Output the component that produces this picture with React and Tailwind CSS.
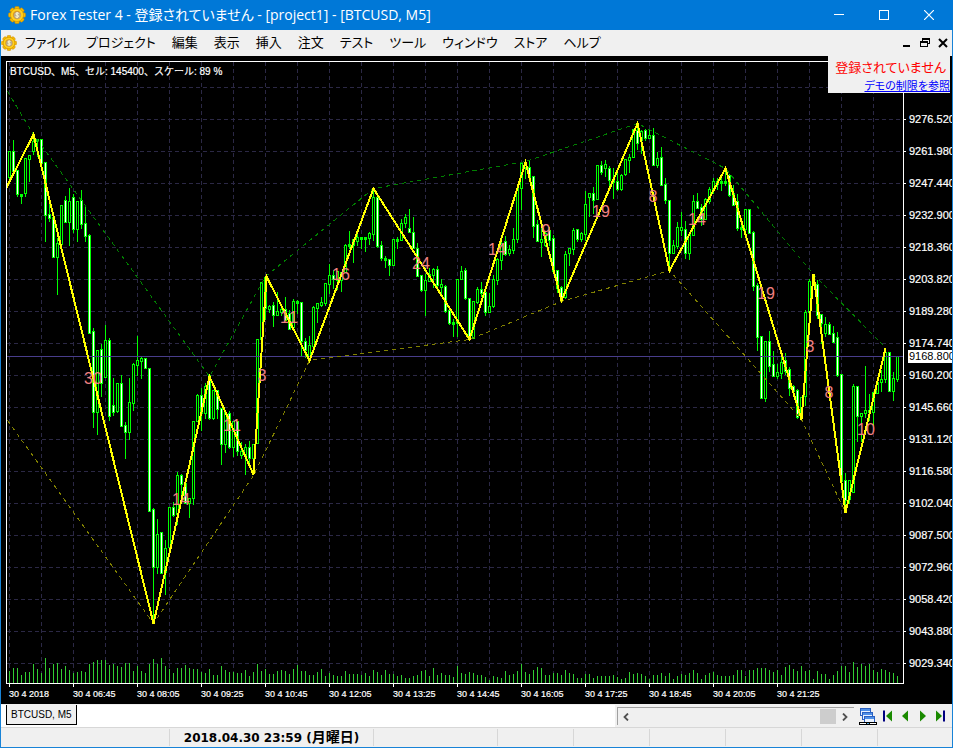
import { clsx } from 'clsx';

const MENU = ['ファイル', 'プロジェクト', '編集', '表示', '挿入', '注文', 'テスト', 'ツール', 'ウィンドウ', 'ストア', 'ヘルプ'];

const PRICES = [
  '9276.520', '9261.980', '9247.440', '9232.900', '9218.360', '9203.820', '9189.280', '9174.740', '9160.200',
  '9145.660', '9131.120', '9116.580', '9102.040', '9087.500', '9072.960', '9058.420', '9043.880', '9029.340',
];

const TIMES = [
  '30 4 2018', '30 4 06:45', '30 4 08:05', '30 4 09:25', '30 4 10:45', '30 4 12:05', '30 4 13:25',
  '30 4 14:45', '30 4 16:05', '30 4 17:25', '30 4 18:45', '30 4 20:05', '30 4 21:25',
];

// [high, body top, body bottom, low, falling]
const CANDLES = [
  [151, 151, 177, 180, 0], [140, 151, 171, 171, 1], [170, 170, 194, 196, 1], [194, 194, 196, 203, 0], [158, 158, 193, 196, 0],
  [155, 155, 159, 181, 0], [133, 141, 151, 154, 0], [139, 139, 141, 156, 0], [139, 139, 163, 163, 1], [162, 162, 215, 241, 1],
  [200, 214, 218, 221, 1], [217, 217, 257, 257, 1], [238, 243, 257, 294, 0], [205, 205, 244, 244, 0], [196, 200, 222, 222, 1],
  [188, 201, 222, 245, 0], [194, 197, 229, 232, 1], [201, 201, 229, 241, 0], [190, 200, 224, 228, 1], [207, 223, 236, 241, 1],
  [234, 235, 333, 333, 1], [328, 331, 412, 427, 1], [350, 350, 412, 434, 0], [344, 349, 383, 396, 1], [325, 340, 377, 377, 0],
  [338, 340, 416, 420, 1], [378, 405, 412, 415, 1], [383, 383, 411, 412, 0], [375, 383, 426, 426, 1], [422, 425, 432, 458, 1],
  [378, 402, 432, 439, 0], [363, 364, 403, 410, 0], [336, 360, 365, 375, 0], [357, 358, 361, 378, 0], [358, 358, 368, 368, 1],
  [368, 368, 511, 511, 1], [508, 509, 567, 622, 1], [519, 534, 567, 573, 0], [532, 532, 573, 573, 1], [540, 548, 572, 594, 0],
  [507, 507, 547, 547, 0], [502, 507, 515, 516, 1], [472, 475, 514, 524, 0], [474, 475, 484, 500, 1], [480, 483, 503, 503, 1],
  [498, 498, 503, 517, 0], [421, 421, 498, 504, 0], [394, 395, 421, 421, 0], [388, 395, 413, 430, 1], [383, 386, 413, 418, 0],
  [375, 375, 418, 419, 1], [390, 390, 418, 419, 0], [390, 390, 409, 418, 1], [408, 408, 444, 464, 1], [410, 412, 444, 452, 0],
  [411, 413, 447, 448, 1], [421, 421, 447, 456, 0], [421, 421, 451, 455, 1], [442, 451, 455, 458, 0], [444, 447, 455, 474, 0],
  [441, 447, 458, 462, 1], [444, 444, 458, 473, 0], [339, 339, 443, 443, 0], [282, 282, 339, 339, 0], [277, 277, 308, 319, 1],
  [305, 306, 309, 312, 0], [302, 305, 315, 326, 1], [292, 311, 315, 315, 0], [304, 309, 312, 315, 0], [297, 309, 320, 320, 1],
  [310, 313, 329, 329, 1], [299, 301, 327, 327, 0], [300, 301, 303, 313, 0], [302, 302, 341, 356, 1], [338, 341, 350, 357, 1],
  [336, 345, 358, 358, 0], [306, 307, 346, 346, 0], [303, 303, 308, 322, 0], [297, 302, 305, 306, 0], [283, 283, 303, 305, 0],
  [264, 275, 284, 293, 0], [270, 275, 279, 288, 1], [271, 271, 280, 289, 0], [272, 272, 280, 291, 0], [244, 245, 272, 272, 0],
  [231, 244, 246, 248, 0], [239, 239, 245, 262, 0], [233, 237, 241, 245, 0], [237, 237, 239, 248, 0], [237, 237, 239, 251, 0],
  [232, 233, 238, 244, 0], [188, 197, 234, 240, 0], [197, 197, 246, 247, 1], [241, 245, 258, 260, 1], [256, 258, 260, 267, 0],
  [259, 259, 265, 275, 1], [239, 239, 265, 265, 0], [237, 239, 241, 248, 0], [219, 223, 240, 240, 0], [214, 217, 223, 227, 0],
  [209, 228, 232, 232, 1], [217, 232, 248, 248, 1], [243, 248, 276, 276, 1], [275, 275, 290, 291, 1], [274, 280, 290, 315, 0],
  [268, 274, 281, 281, 0], [268, 269, 275, 287, 0], [266, 269, 285, 286, 1], [279, 284, 287, 293, 0], [285, 286, 311, 312, 1],
  [310, 310, 323, 324, 1], [319, 322, 324, 336, 0], [279, 279, 323, 336, 0], [266, 271, 279, 279, 0], [268, 270, 298, 299, 1],
  [298, 298, 338, 338, 1], [301, 301, 338, 338, 0], [287, 289, 302, 303, 0], [282, 289, 293, 296, 1], [289, 292, 312, 315, 1],
  [293, 306, 312, 312, 0], [275, 279, 306, 307, 0], [258, 259, 280, 284, 0], [241, 243, 260, 269, 0], [236, 241, 254, 255, 1],
  [245, 249, 253, 255, 0], [228, 239, 250, 253, 0], [187, 188, 239, 242, 0], [163, 163, 188, 209, 0], [163, 163, 167, 178, 0],
  [161, 167, 177, 180, 1], [176, 176, 226, 237, 1], [220, 224, 241, 241, 1], [220, 239, 242, 256, 0], [232, 233, 245, 246, 0],
  [227, 230, 240, 245, 1], [235, 238, 271, 271, 1], [270, 270, 288, 292, 1], [286, 287, 299, 300, 1], [251, 254, 297, 298, 0],
  [248, 248, 253, 265, 0], [228, 230, 249, 254, 0], [229, 229, 239, 241, 1], [232, 233, 239, 241, 0], [191, 204, 234, 240, 0],
  [193, 193, 197, 216, 0], [187, 193, 200, 213, 1], [165, 165, 199, 199, 0], [161, 165, 172, 174, 1], [160, 164, 168, 176, 0],
  [166, 168, 180, 188, 1], [168, 179, 182, 198, 0], [172, 181, 189, 190, 1], [174, 175, 189, 190, 0], [159, 159, 174, 175, 0],
  [154, 157, 160, 172, 0], [129, 129, 157, 157, 0], [124, 130, 143, 149, 1], [130, 131, 140, 153, 0], [129, 130, 138, 140, 1],
  [129, 135, 138, 138, 0], [128, 135, 165, 165, 1], [152, 158, 165, 167, 0], [147, 157, 185, 185, 1], [178, 184, 200, 203, 1],
  [200, 200, 253, 269, 1], [240, 245, 253, 253, 0], [222, 227, 246, 248, 0], [212, 227, 230, 235, 0], [221, 229, 253, 258, 1],
  [233, 234, 253, 259, 0], [195, 201, 235, 235, 0], [193, 201, 208, 208, 1], [204, 207, 219, 225, 1], [198, 199, 219, 219, 0],
  [187, 189, 201, 203, 0], [178, 181, 190, 193, 0], [178, 181, 184, 189, 0], [178, 181, 183, 190, 0], [167, 181, 183, 185, 0],
  [174, 175, 195, 196, 1], [185, 193, 205, 205, 1], [194, 201, 228, 230, 1], [224, 227, 229, 237, 0], [209, 209, 229, 233, 0],
  [209, 209, 233, 233, 1], [231, 232, 286, 290, 1], [283, 285, 337, 350, 1], [336, 336, 398, 398, 1], [341, 341, 398, 401, 0],
  [331, 341, 366, 371, 1], [351, 364, 376, 376, 1], [364, 372, 376, 378, 0], [357, 362, 373, 378, 0], [353, 360, 371, 374, 1],
  [367, 369, 388, 395, 1], [385, 386, 391, 395, 1], [389, 390, 417, 418, 1], [397, 397, 417, 418, 0], [310, 312, 396, 405, 0],
  [279, 281, 312, 312, 0], [275, 276, 285, 285, 1], [280, 284, 315, 318, 1], [314, 314, 323, 343, 1], [317, 324, 333, 336, 0],
  [322, 324, 334, 334, 1], [326, 333, 342, 342, 1], [332, 337, 375, 376, 1], [374, 374, 481, 482, 1], [473, 480, 500, 512, 1],
  [480, 480, 499, 503, 0], [384, 386, 492, 492, 0], [386, 386, 416, 441, 1], [413, 413, 416, 441, 0], [366, 410, 413, 417, 0],
  [394, 410, 412, 420, 0], [392, 392, 412, 427, 0], [382, 382, 393, 393, 0], [370, 379, 382, 391, 0], [352, 352, 379, 382, 0],
  [352, 352, 391, 391, 1], [372, 378, 391, 400, 0], [356, 356, 379, 381, 0],
];

const VOLUMES = [
  12, 15, 15, 8, 11, 11, 19, 14, 10, 25, 15, 19, 20, 14, 17, 13, 10, 11, 12, 11, 19, 21, 23, 23, 23, 18, 19, 17, 16, 20,
  20, 12, 17, 12, 10, 19, 24, 19, 25, 17, 14, 10, 15, 15, 18, 15, 14, 14, 11, 10, 14, 8, 8, 17, 13, 11, 11, 10, 10, 13,
  7, 11, 19, 12, 14, 9, 9, 12, 13, 12, 9, 14, 18, 12, 12, 8, 8, 11, 14, 7, 10, 8, 7, 7, 12, 9, 9, 9, 8, 10, 7, 13, 11,
  8, 13, 9, 9, 7, 8, 5, 5, 7, 8, 12, 13, 7, 15, 8, 10, 8, 8, 6, 17, 10, 9, 11, 10, 8, 8, 6, 3, 7, 6, 5, 12, 8, 9, 12,
  19, 11, 9, 13, 16, 15, 8, 8, 10, 10, 8, 13, 10, 9, 5, 5, 9, 9, 5, 7, 7, 7, 7, 8, 6, 4, 5, 11, 9, 10, 9, 7, 4, 8, 8,
  10, 7, 10, 4, 7, 9, 8, 10, 13, 10, 4, 8, 10, 11, 8, 7, 7, 7, 8, 13, 13, 7, 13, 13, 15, 15, 15, 13, 11, 13, 8, 16, 18,
  14, 12, 17, 12, 13, 4, 12, 9, 9, 4, 8, 12, 17, 17, 11, 21, 16, 19, 17, 19, 13, 11, 14, 13, 11, 10, 7,
];

const ZIGZAG =
  '6,187 33,134 153,623 209,376 253,474 266,276 309,360 373,188 469,339 525,162 561,300 637,123 669,270 725,168 801,419 813,274 845,512 885,348';
const UPPER = '7,91 33,134 209,376 265,276 373,188 525,161 637,123 725,168 813,274 885,347';
const LOWER = '7,420 153,623 253,475 309,360 469,339 561,301 669,270 801,419 845,512';

const WAVES = [
  ['30', 93, 384], ['14', 181, 505], ['11', 232, 431], ['3', 262, 381], ['11', 289, 323], ['16', 341, 280],
  ['24', 421, 269], ['14', 497, 255], ['9', 546, 236], ['19', 601, 217], ['8', 653, 202], ['14', 697, 225],
  ['19', 766, 299], ['3', 810, 352], ['8', 829, 398], ['10', 866, 435],
];

function GearIcon({ className }) {
  return (
    <svg viewBox="0 0 18 18" className={className} aria-hidden="true">
      <g fill="#f5b800" stroke="#c98a00" strokeWidth="0.5">
        {[0, 45, 90, 135, 180, 225, 270, 315].map((a) => (
          <path key={a} d="M6.5 4 L7 .8 Q9 0 11 .8 L11.5 4 Z" transform={`rotate(${a} 9 9)`} />
        ))}
        <circle cx="9" cy="9" r="6.4" />
      </g>
      <circle cx="9" cy="9" r="6" fill="#ffd21f" />
      <circle cx="9" cy="9" r="4.2" fill="#d9982a" />
      <circle cx="9.3" cy="9.3" r="3.4" fill="#b9ad8e" />
      <path d="M10.8 7.4 Q9 6.2 7.9 7.4 Q7.4 8.6 9.2 9 Q11 9.5 10.4 10.7 Q9.2 12 7.4 10.7 M9.1 6 V12" fill="none" stroke="#fff8d0" strokeWidth="1" />
    </svg>
  );
}

function TitleBar() {
  return (
    <header className="flex h-[30px] items-center bg-[#0078d7] pr-[2px] pl-2 text-white">
      <GearIcon className="size-[18px]" />
      <h1 className="ml-1 flex-1 text-sm leading-5 whitespace-nowrap [font-feature-settings:'palt']">
        Forex Tester 4 - 登録されていません - [project1] - [BTCUSD, M5]
      </h1>
      <button aria-label="最小化" className="flex h-full w-[45px] items-center justify-center">
        <svg viewBox="0 0 10 10" className="size-[10px]" shapeRendering="crispEdges"><path d="M0 4.5h10" stroke="#fff" /></svg>
      </button>
      <button aria-label="最大化" className="flex h-full w-[45px] items-center justify-center">
        <svg viewBox="0 0 10 10" className="size-[10px]" shapeRendering="crispEdges"><path d="M.5 .5h9v9h-9z" fill="none" stroke="#fff" /></svg>
      </button>
      <button aria-label="閉じる" className="flex h-full w-[45px] items-center justify-center">
        <svg viewBox="0 0 10 10" className="size-[10px]"><path d="M0 0l10 10M10 0L0 10" stroke="#fff" strokeWidth="1.2" /></svg>
      </button>
    </header>
  );
}

function MenuBar() {
  return (
    <nav className="flex h-[26px] items-center bg-[#f0f0f0]">
      <GearIcon className="size-4" />
      <div className="flex flex-1">
        {MENU.map((item) => (
          <button key={item} className="px-2 text-[13px] leading-5 whitespace-nowrap [font-feature-settings:'palt']">{item}</button>
        ))}
      </div>
      <div className="flex items-center gap-2 pr-1">
        <button aria-label="子ウィンドウを最小化">
          <svg viewBox="0 0 10 10" className="size-[10px]" shapeRendering="crispEdges"><path d="M1 7h7v2H1z" /></svg>
        </button>
        <button aria-label="元に戻す">
          <svg viewBox="0 0 10 10" className="size-[10px]" shapeRendering="crispEdges">
            <path d="M2 0h8v6H8V5h1V2H3v1H2z" />
            <path d="M0 3h8v6H0zM1 5v3h6V5z" fillRule="evenodd" />
          </svg>
        </button>
        <button aria-label="子ウィンドウを閉じる">
          <svg viewBox="0 0 10 10" className="size-[10px]"><path d="M1 1l8 8M9 1L1 9" stroke="#000" strokeWidth="2" /></svg>
        </button>
      </div>
    </nav>
  );
}

function Candle({ x, data }) {
  const [high, top, bottom, low, falling] = data;
  return (
    <g>
      <rect x={x} y={high} width="1" height={low - high + 1} fill="#00ff00" />
      <rect x={x - 1} y={top} width="3" height={bottom - top + 1} fill="#00ff00" />
      {bottom - top > 2 && (
        <rect x={x} y={top + 1} width="1" height={bottom - top - 1} fill={falling ? '#ffffff' : '#000000'} />
      )}
    </g>
  );
}

function Chart() {
  const columns = Array.from({ length: 28 }, (_, i) => 9 + i * 32);
  const rows = Array.from({ length: 19 }, (_, i) => 87 + i * 32);
  return (
    <svg viewBox="1 56 951 648" className="block h-auto w-full bg-black" role="img" aria-label="BTCUSD, M5">
      <g shapeRendering="crispEdges" fill="none">
        <g stroke="#2b2845" strokeDasharray="4 3">
          {columns.map((x) => <path key={x} d={`M${x}.5 62V683`} />)}
          {rows.map((y) => <path key={y} d={`M7 ${y}.5H903`} />)}
        </g>
        {VOLUMES.map((v, i) => <rect key={i} x={9 + i * 4} y={683 - v} width="1" height={v} fill="#32cd32" />)}
        {CANDLES.map((c, i) => <Candle key={i} x={9 + i * 4} data={c} />)}
        <path d="M7 356.5H903" stroke="#483d8b" />
        {/* the lines run through the middle of the candle pixels */}
        <g transform="translate(0.5 0.5)">
          <polyline points={UPPER} stroke="#008000" strokeDasharray="4 4" />
          <polyline points={LOWER} stroke="#808000" strokeDasharray="4 4" />
          <polyline points={ZIGZAG} stroke="#ffff00" strokeWidth="2" />
        </g>
        <path d="M6.5 61.5H903.5V683.5H6.5Z" stroke="#fff" />
        {TIMES.map((t, i) => <path key={t} d={`M${9 + i * 64}.5 684v3`} stroke="#fff" />)}
        {PRICES.map((p, i) => <path key={p} d={`M904 ${119 + i * 32}.5h2`} stroke="#fff" />)}
      </g>
      <g className="text-base [font-kerning:none]" fill="#f08080" textAnchor="middle">
        {WAVES.map(([n, x, y]) => <text key={x} x={x} y={y}>{n}</text>)}
      </g>
      <g fill="#fff" stroke="#fff" strokeWidth="0.2">
        <text x="10" y="75" className="text-[10px]">BTCUSD、M5、セル: 145400、スケール: 89 %</text>
        <g className="text-[9px]">
          {TIMES.map((t, i) => <text key={t} x={9 + i * 64} y="697">{t}</text>)}
        </g>
        <g className="text-[11px] [font-kerning:none]">
          {PRICES.map((p, i) => <text key={p} x="909" y={123 + i * 32}>{p}</text>)}
        </g>
      </g>
      <rect x="908" y="350" width="44" height="13" fill="#fff" />
      <text x="909" y="360" className="text-[11px]" fill="#000">9168.800</text>
    </svg>
  );
}

function DemoNotice() {
  return (
    <aside className="absolute top-0 right-[2px] h-[37px] w-[122px] bg-[#f0f0f0] text-right whitespace-nowrap [font-feature-settings:'palt']">
      <p className="pr-1 text-[13px] leading-6 text-[#ff0000]">登録されていません</p>
      <a href="#limits" className="block text-[11px] leading-3 text-[#0000ff] underline">デモの制限を参照</a>
    </aside>
  );
}

function Play({ label, flip, bar }) {
  return (
    <button aria-label={label} className="flex h-5 w-[18px] items-center justify-center">
      <svg viewBox="0 0 10 12" className={clsx('h-3 w-[10px]', flip && '-scale-x-100')}>
        {bar ? <path d="M0 .5v11l6-5.500z" fill="#1a8a00" /> : <path d="M2 .5v11l6-5.500z" fill="#1a8a00" />}
        {bar && <path d="M7 .5h2v11H7z" fill="#000080" />}
      </svg>
    </button>
  );
}

function TabRow() {
  return (
    <div className="flex h-[23px] items-start bg-[#f0f0f0] pt-px">
      <div className="flex h-[22px] flex-1 items-start bg-white pl-[5px]">
        <button className="h-5 border border-t-0 border-black bg-[#f0f0f0] px-1 text-[10px] leading-5 whitespace-nowrap">BTCUSD, M5</button>
      </div>
      <div className="ml-[2px] mt-[2px] flex h-[18px] w-[237px] items-center border-t border-l border-[#a0a0a0]">
        <button aria-label="左へ" className="flex w-4 shrink-0 justify-center">
          <svg viewBox="0 0 8 8" className="size-2"><path d="M6 .5L2.500 4 6 7.500" fill="none" stroke="#505050" strokeWidth="1.800" /></svg>
        </button>
        <input
          type="range"
          aria-label="スクロール"
          defaultValue="100"
          className="h-4 min-w-0 flex-1 appearance-none bg-[#f0f0f0] [&::-webkit-slider-thumb]:h-[15px] [&::-webkit-slider-thumb]:w-4 [&::-webkit-slider-thumb]:appearance-none [&::-webkit-slider-thumb]:bg-[#cdcdcd]"
        />
        <button aria-label="右へ" className="flex w-[18px] shrink-0 justify-center">
          <svg viewBox="0 0 8 8" className="size-2"><path d="M2 .5L5.500 4 2 7.500" fill="none" stroke="#505050" strokeWidth="1.800" /></svg>
        </button>
      </div>
      <div className="flex items-center pt-px">
        <button aria-label="ウィンドウ一覧" className="ml-1 flex w-5 justify-center">
          <svg viewBox="0 0 18 17" className="h-[17px] w-[18px]" shapeRendering="crispEdges">
            <g fill="#eaf3ff" stroke="#2a60c0">
              <path d="M1.500 .5h10v7h-10z" /><path d="M2 2h9" stroke="#4f90e8" strokeWidth="2" />
              <path d="M3.500 4.500h10v7h-10z" /><path d="M4 6h9" stroke="#4f90e8" strokeWidth="2" />
              <path d="M5.500 8.500h10v6h-10z" /><path d="M6 10h9" stroke="#4f90e8" strokeWidth="2" />
            </g>
            <path d="M0 14h18v3H0z" fill="#000" /><path d="M1 15.500h6M11 15.500h6" stroke="#fff" /><path d="M8 15.500h2" stroke="#4fb0e8" />
          </svg>
        </button>
        <Play label="最初へ" flip bar />
        <Play label="前へ" flip />
        <Play label="次へ" />
        <Play label="最後へ" bar />
        <span className="w-[2px]" />
      </div>
    </div>
  );
}

function StatusBar() {
  return (
    <footer className="flex h-5 border-t border-[#d7d7d7] bg-[#f0f0f0] pt-px pb-px">
      <div className="w-[169px] border-r border-[#d7d7d7]" />
      <div className="w-[204px] border-r border-[#d7d7d7] text-center font-['DejaVu_Sans','Noto_Sans_CJK_JP',sans-serif] text-xs leading-[18px] font-bold whitespace-nowrap">
        2018.04.30 23:59 (<span className="text-sm leading-4">月曜日</span>)
      </div>
      <div className="w-[124px] border-r border-[#d7d7d7]" />
      {[1, 2, 3, 4, 5].map((n) => <div key={n} className="w-[76px] border-r border-[#d7d7d7]" />)}
    </footer>
  );
}

export default function App() {
  return (
    <div className="overflow-hidden bg-white pr-px pb-px font-['Liberation_Sans','Noto_Sans_CJK_JP',sans-serif] text-black">
      <div className="font-['Open_Sans','Noto_Sans_CJK_JP',sans-serif]">
        <TitleBar />
      </div>
      <div className="border-x border-b border-[#1883d7]">
        <MenuBar />
        <main className="relative">
          <Chart />
          <DemoNotice />
        </main>
        <TabRow />
        <StatusBar />
      </div>
    </div>
  );
}
